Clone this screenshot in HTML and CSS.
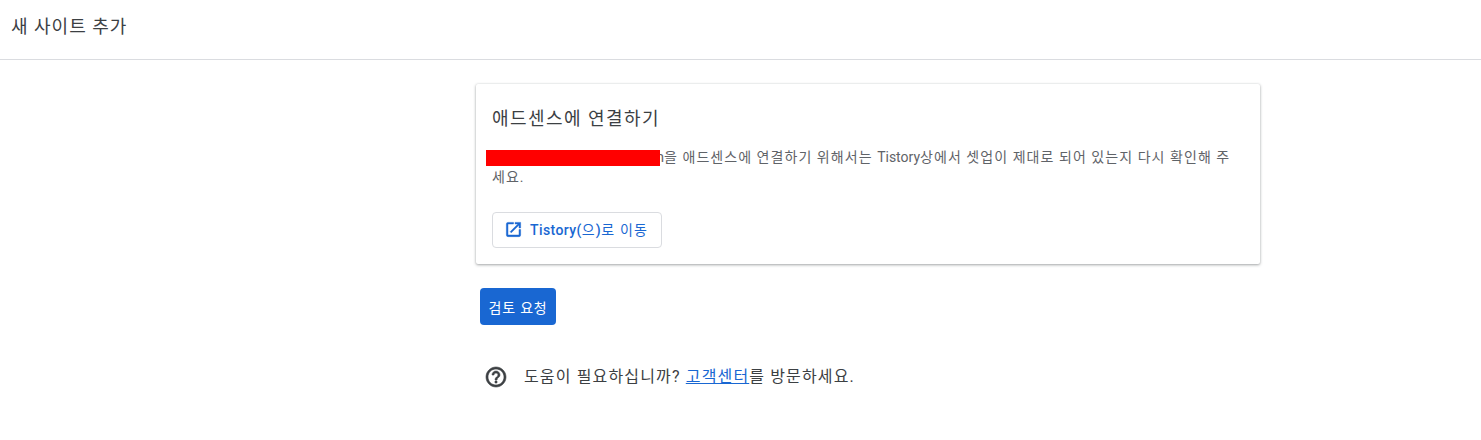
FILE: index.html
```html
<!DOCTYPE html>
<html lang="ko">

<head>
    <meta charset="UTF-8">
    <title>새 사이트 추가</title>
    <link rel="stylesheet" href="styles.css">
</head>

<body>
    <div class="header">
        <p class="title">새 사이트 추가</p>
    </div>
    <div class="contain">
        <div class="card">
            <p class="card-title">애드센스에 연결하기</p>
            <p class="card-body"><span class="site"><span class="redact"></span>m</span>을 애드센스에 연결하기 위해서는 <span class="latin">Tistory</span>상에서 셋업이 제대로 되어 있는지 다시 확인해 주세요.</p>
            <a class="link-btn" href="#">
                <svg class="open-icon" viewBox="0 0 24 24" width="19" height="19">
                    <path d="M19 19H5V5h7V3H5a2 2 0 0 0-2 2v14a2 2 0 0 0 2 2h14a2 2 0 0 0 2-2v-7h-2v7zM14 3v2h3.59l-9.83 9.83 1.41 1.41L19 6.41V10h2V3h-7z" />
                </svg>
                <span class="link-text"><span class="latin">Tistory(</span>으<span class="latin">)</span>로 이동</span>
            </a>
        </div>
        <button class="review">검토 요청</button>
        <div class="help">
            <svg class="help-icon" viewBox="0 0 24 24" width="24" height="24">
                <path d="M11 18h2v-2h-2v2zm1-16C6.48 2 2 6.48 2 12s4.48 10 10 10 10-4.48 10-10S17.52 2 12 2zm0 18c-4.41 0-8-3.59-8-8s3.59-8 8-8 8 3.59 8 8-3.59 8-8 8zm0-14c-2.21 0-4 1.79-4 4h2c0-1.1.9-2 2-2s2 .9 2 2c0 2-3 1.75-3 5h2c0-2.25 3-2.5 3-5 0-2.21-1.79-4-4-4z" />
            </svg>
            <p>도움이 필요하십니까? <a href="#">고객센터</a>를 방문하세요.</p>
        </div>
    </div>
</body>

</html>
```

FILE: styles.css
```css
* {
    margin: 0;
    padding: 0;
    box-sizing: border-box;
}

body {
    font-family: Roboto, "Noto Sans CJK KR", Arial, sans-serif;
    font-size: 14px;
    color: #3c4043;
    background-color: #fff;
}

.latin {
    letter-spacing: 0;
}

.header {
    height: 60px;
    padding: 0 11px 10px;
    border-bottom: 1px solid #dadce0;
    display: flex;
    align-items: center;
}

.header .title {
    font-size: 18px;
    letter-spacing: 1px;
    color: #3c4043;
}

.contain {
    width: 784px;
    margin-left: 476px;
    padding-top: 24px;
}

.card {
    height: 180px;
    padding: 20px 16px 16px;
    border-radius: 2px;
    background-color: #fff;
    box-shadow: 0 1px 3px rgba(60, 64, 67, 0.45), 0 0 2px rgba(60, 64, 67, 0.12);
}

.card-title {
    margin-top: 2px;
    font-size: 18px;
    line-height: 26px;
    letter-spacing: 1.45px;
    color: #3c4043;
}

.card-body {
    margin-top: 15px;
    line-height: 20px;
    letter-spacing: 1.05px;
    color: #5f6368;
}

.site {
    position: relative;
    display: inline-block;
    width: 172px;
    text-align: right;
    letter-spacing: 0;
}

.redact {
    position: absolute;
    left: -6px;
    top: 3px;
    width: 174px;
    height: 16px;
    background-color: #f00;
}

.link-btn {
    display: inline-flex;
    align-items: center;
    gap: 7px;
    height: 36px;
    width: 170px;
    margin-top: 25px;
    padding: 0 0 2px 11px;
    border: 1px solid #dadce0;
    border-radius: 4px;
    letter-spacing: 1.2px;
    color: #1967d2;
    text-decoration: none;
}

.link-text .latin {
    font-weight: 500;
    letter-spacing: 0.4px;
}

.open-icon {
    fill: #1967d2;
    stroke: #1967d2;
    stroke-width: 0.6;
}

.review {
    display: block;
    width: 76px;
    height: 37px;
    margin: 24px 0 0 4px;
    border: 0;
    border-radius: 4px;
    background-color: #1967d2;
    color: white;
    font-family: inherit;
    font-size: 14px;
    letter-spacing: 0.8px;
}

.help {
    display: flex;
    align-items: flex-start;
    gap: 16px;
    margin: 40px 0 0 8px;
    font-size: 16px;
    line-height: 24px;
    letter-spacing: 1.15px;
    color: #3c4043;
}

.help-icon {
    fill: #3c4043;
    stroke: #3c4043;
    stroke-width: 0.6;
}

.help a {
    color: #1967d2;
}
```
